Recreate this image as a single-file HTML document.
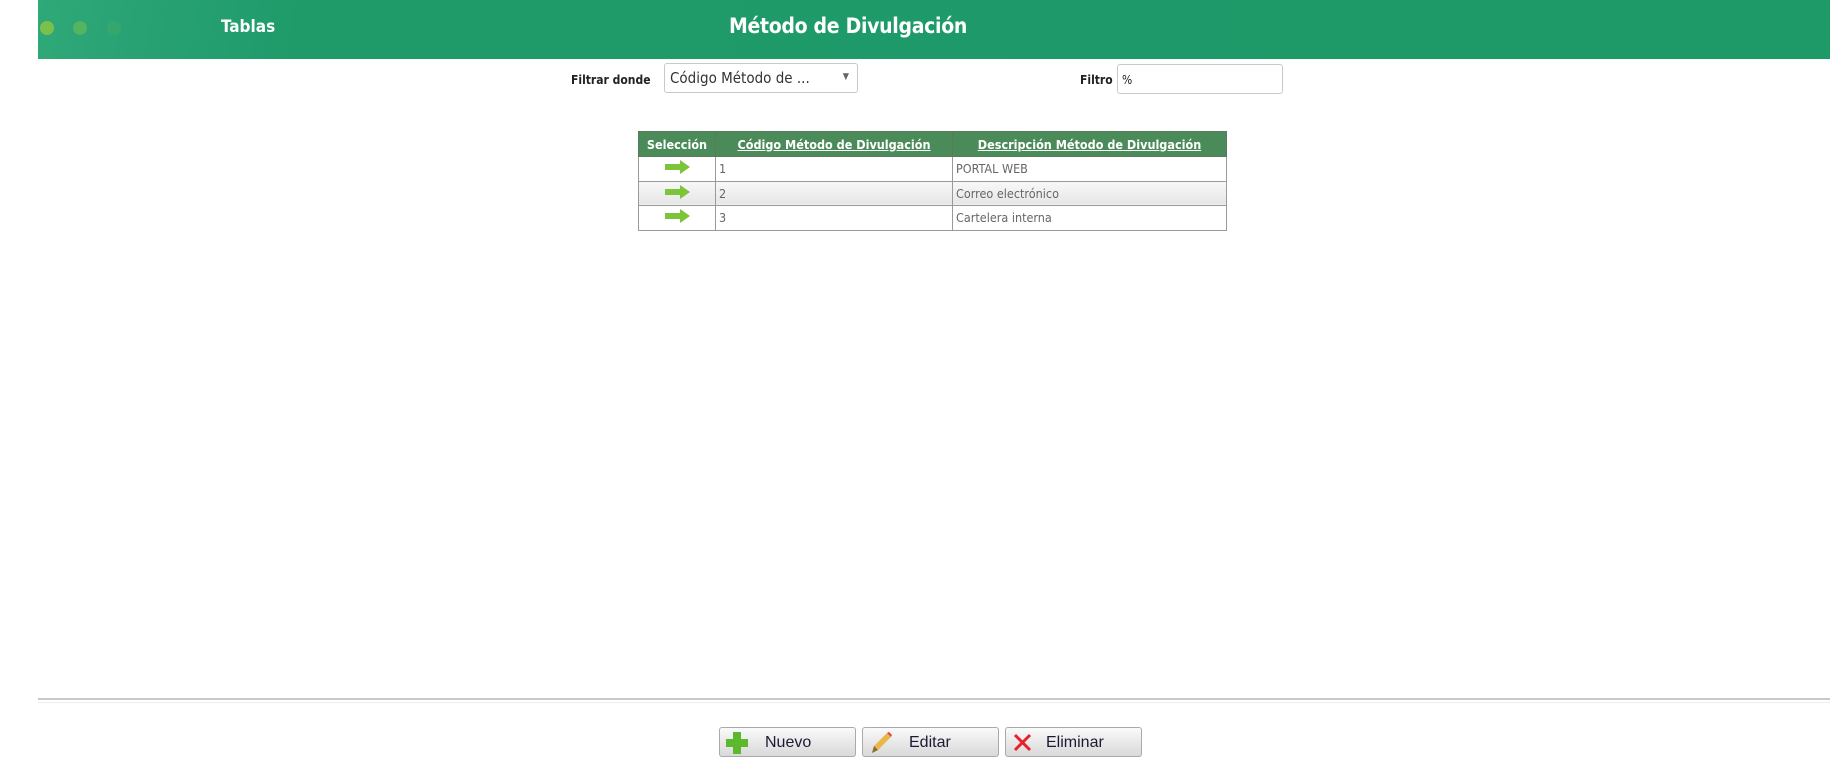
<!DOCTYPE html>
<html><head><meta charset="utf-8"><style>
*{margin:0;padding:0;box-sizing:border-box}
body{width:1838px;height:774px;background:#fff;position:relative;overflow:hidden;font-family:"DejaVu Sans Condensed","Liberation Sans",sans-serif}
.hdr{position:absolute;left:38px;top:0;width:1792px;height:59px;background:linear-gradient(100deg,#2fa978 0px,#27a172 120px,#1f9b6a 260px,#1e9a69 100%)}
.dot{position:absolute;top:21px;width:14px;height:14px;border-radius:50%}
.t{position:absolute;color:#fff;font-weight:bold}
.lbl{position:absolute;font-size:12px;font-weight:bold;color:#222}
.box{position:absolute;border:1px solid #c9c9c9;border-radius:3px;background:#fff}
table{position:absolute;left:638px;top:131px;border-collapse:collapse;font-size:12.5px;table-layout:fixed;width:588px}
th{background:#4b8b5a;color:#fff;height:25px;padding:0 1px;border:1px solid #5a7a60;font-weight:bold;white-space:nowrap;overflow:hidden}
th u{text-decoration:underline}
td{height:24.5px;border:1px solid #9a9a9a;color:#666;padding:0 3px;white-space:nowrap}
tr.g td{background:linear-gradient(#f8f8f8,#e6e6e6)}
.btn{position:absolute;top:727px;height:30px;width:137px;border:1px solid #aaa;border-radius:3px;background:linear-gradient(#fafafa,#e9e9e9 50%,#d9d9d9);font-family:"Liberation Sans",sans-serif;font-size:16px;color:#1a1a33}
.btn span{position:absolute;top:6px}
</style></head><body>
<div class="hdr">
<div class="dot" style="left:2px;background:#7cc04c"></div>
<div class="dot" style="left:35px;background:#5fb95c;opacity:.8"></div>
<div class="dot" style="left:69px;background:#3aa86a;opacity:.7"></div>
<div class="t" style="left:183px;top:17px;font-size:17px">Tablas</div>
<div class="t" style="left:650px;top:14px;font-size:21px;width:320px;text-align:center;letter-spacing:-0.3px">Método de Divulgación</div>
</div>
<div class="lbl" style="left:571px;top:73px">Filtrar donde</div>
<div class="box" style="left:664px;top:63px;width:194px;height:30px"><span style="position:absolute;left:5px;top:5px;font-size:15px;color:#333">Código Método de ...</span><span style="position:absolute;right:8px;top:8px;font-size:9px;color:#666">▼</span></div>
<div class="lbl" style="left:1080px;top:73px">Filtro</div>
<div class="box" style="left:1117px;top:64px;width:166px;height:30px"><span style="position:absolute;left:4px;top:8px;font-size:12px;color:#222">%</span></div>
<table>
<colgroup><col style="width:77px"><col style="width:237px"><col style="width:274px"></colgroup>
<tr><th>Selección</th><th><u>Código Método de Divulgación</u></th><th><u>Descripción Método de Divulgación</u></th></tr>
<tr><td style="text-align:center"><svg width="28" height="14"><path d="M2 4h15V0l10 7-10 7v-4H2z" fill="#7cc43a"/></svg></td><td>1</td><td>PORTAL WEB</td></tr>
<tr class="g"><td style="text-align:center"><svg width="28" height="14"><path d="M2 4h15V0l10 7-10 7v-4H2z" fill="#7cc43a"/></svg></td><td>2</td><td>Correo electrónico</td></tr>
<tr><td style="text-align:center"><svg width="28" height="14"><path d="M2 4h15V0l10 7-10 7v-4H2z" fill="#7cc43a"/></svg></td><td>3</td><td>Cartelera interna</td></tr>
</table>
<div style="position:absolute;left:38px;top:698px;width:1792px;height:2px;background:#c8c8c8"></div>
<div style="position:absolute;left:38px;top:702px;width:1792px;height:1px;background:#eee"></div>
<div class="btn" style="left:719px"><svg style="position:absolute;left:5px;top:3px" width="24" height="24"><path d="M8 1h8v7h7v8h-7v7H8v-7H1V8h7z" fill="#5cb82c"/></svg><span style="left:45px">Nuevo</span></div>
<div class="btn" style="left:862px"><svg style="position:absolute;left:5px;top:3px" width="26" height="24"><path d="M4 22l2-7L19 2l4 4L10 19z" fill="#e9b84a"/><path d="M19 2l4 4 1-2-3-3z" fill="#d44"/><path d="M4 22l2-7 4 4z" fill="#8a6a3a"/></svg><span style="left:46px">Editar</span></div>
<div class="btn" style="left:1005px"><svg style="position:absolute;left:7px;top:5px" width="20" height="20"><path d="M2 2L17 17M17 2L2 17" stroke="#e8222a" stroke-width="3"/></svg><span style="left:40px">Eliminar</span></div>
</body></html>
